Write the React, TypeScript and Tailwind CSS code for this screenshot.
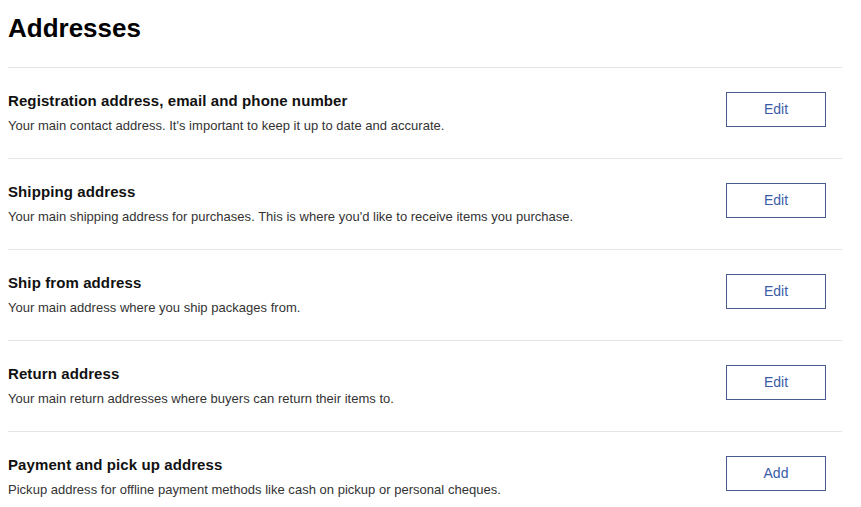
import React from "react";

const rows = [
  { title: "Registration address, email and phone number", desc: "Your main contact address. It's important to keep it up to date and accurate.", btn: "Edit" },
  { title: "Shipping address", desc: "Your main shipping address for purchases. This is where you'd like to receive items you purchase.", btn: "Edit" },
  { title: "Ship from address", desc: "Your main address where you ship packages from.", btn: "Edit" },
  { title: "Return address", desc: "Your main return addresses where buyers can return their items to.", btn: "Edit" },
  { title: "Payment and pick up address", desc: "Pickup address for offline payment methods like cash on pickup or personal cheques.", btn: "Add" },
];

export default function App() {
  return (
    <div className="w-[861px] h-[507px] bg-white overflow-hidden pl-2 pr-[19px]" style={{ fontFamily: '"Liberation Sans", Arial, sans-serif' }}>
      <h1 className="text-[26px] font-bold text-black leading-[30px] pt-[13px] h-[67px]">Addresses</h1>
      {rows.map((r) => (
        <div key={r.title} className="border-t border-[#e5e5e5] h-[91px] flex justify-between pt-[24px]">
          <div>
            <div className="text-[15px] font-bold text-[#111] leading-[18px] tracking-[0.1px]">{r.title}</div>
            <div className="text-[13px] text-[#333] leading-[16px] mt-[8px] tracking-[0.02px]">{r.desc}</div>
          </div>
          <button className="w-[100px] h-[35px] border border-[#4a5c8f] text-[#3a5ca8] text-[14px] mr-[16px] bg-white">{r.btn}</button>
        </div>
      ))}
    </div>
  );
}
